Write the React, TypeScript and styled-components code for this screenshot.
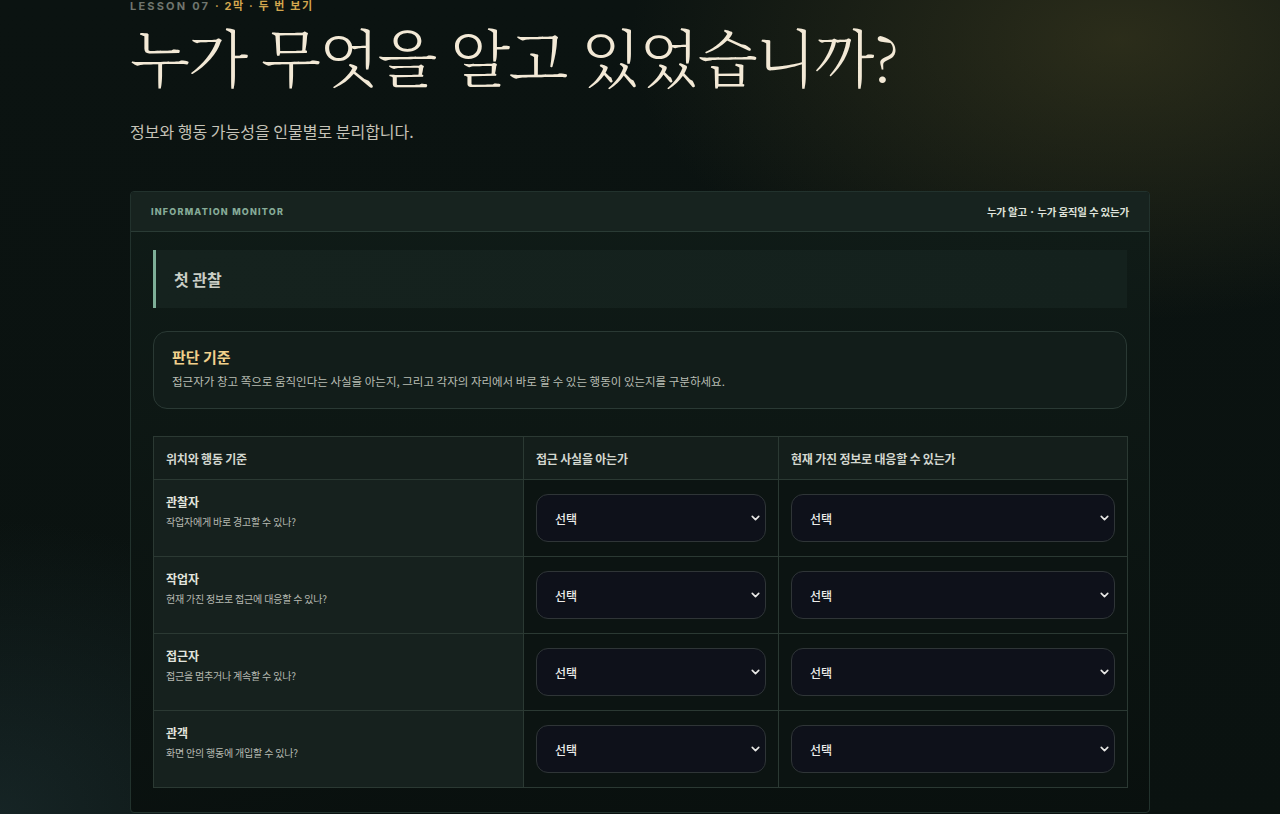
import React from 'react';
import styled, { createGlobalStyle } from 'styled-components';
import { ChevronDown } from 'lucide-react';

const GlobalStyle = createGlobalStyle`
	html, body {
		margin: 0;
		padding: 0;
		background: #0a1210;
	}
	body {
		font-family: 'Inter', 'Noto Sans CJK KR', sans-serif;
		color: #e4e4dc;
		-webkit-font-smoothing: antialiased;
	}
`;

const Page = styled.div`
	min-height: 814px;
	background:
		radial-gradient(ellipse 700px 400px at 1120px 40px, rgba(70, 66, 34, 0.55), transparent 70%),
		radial-gradient(ellipse 520px 420px at 0px 814px, rgba(36, 58, 62, 0.45), transparent 70%),
		linear-gradient(180deg, #0b1311 0%, #0a1210 100%);
	padding: 0 130px 40px;
	box-sizing: border-box;
`;

const Kicker = styled.div`
	font-family: 'Inter', 'Noto Sans CJK KR', sans-serif;
	font-size: 11px;
	font-weight: 700;
	letter-spacing: 2.2px;
	line-height: 12px;
	color: #70756e;
	span {
		color: #d2a64e;
		letter-spacing: 1.6px;
	}
`;

const Title = styled.h1`
	margin: 6px 0 0;
	font-family: 'Noto Serif CJK KR', 'Noto Sans CJK KR', serif;
	font-weight: 300;
	font-size: 62px;
	line-height: 76px;
	letter-spacing: -1.6px;
	color: #f3e9d6;
`;

const Subtitle = styled.p`
	margin: 26px 0 0;
	font-family: 'Noto Sans CJK KR', sans-serif;
	font-size: 16px;
	color: #c6c3b8;
	line-height: 22px;
`;

const Panel = styled.section`
	margin-top: 49px;
	border: 1px solid #22322d;
	border-radius: 4px;
	background: linear-gradient(180deg, rgba(16, 28, 24, 0.92), rgba(9, 16, 14, 0.92));
	overflow: hidden;
`;

const PanelHeader = styled.header`
	height: 39px;
	display: flex;
	align-items: center;
	justify-content: space-between;
	padding: 0 20px;
	background: #17231f;
	border-bottom: 1px solid #2a3b35;
`;

const MonitorLabel = styled.div`
	font-family: 'Inter', sans-serif;
	font-size: 9px;
	font-weight: 800;
	letter-spacing: 1.2px;
	color: #86ab98;
`;

const MonitorNote = styled.div`
	font-family: 'Noto Sans CJK KR', sans-serif;
	font-size: 10.5px;
	font-weight: 700;
	letter-spacing: -0.2px;
	color: #dfe2da;
`;

const PanelBody = styled.div`
	padding: 18px 22px 24px;
`;

const Section = styled.div`
	height: 58px;
	display: flex;
	align-items: center;
	padding-left: 18px;
	border-left: 3px solid #7eaf98;
	background: linear-gradient(90deg, #15221e, #14211d);
	font-family: 'Noto Sans CJK KR', sans-serif;
	font-size: 16px;
	font-weight: 700;
	color: #c9cdc5;
`;

const Criteria = styled.div`
	margin-top: 23px;
	padding: 14px 18px 0;
	height: 78px;
	box-sizing: border-box;
	border: 1px solid #2a3934;
	border-radius: 14px;
	background: #121d1a;
`;

const CriteriaTitle = styled.div`
	font-family: 'Noto Sans CJK KR', sans-serif;
	font-size: 15px;
	font-weight: 700;
	color: #f1d08c;
	line-height: 22px;
`;

const CriteriaText = styled.div`
	margin-top: 5px;
	font-family: 'Noto Sans CJK KR', sans-serif;
	font-size: 11.5px;
	color: #b9bdb4;
	line-height: 16px;
`;

const Table = styled.table`
	margin-top: 27px;
	width: 100%;
	border-collapse: collapse;
	table-layout: fixed;
	font-family: 'Noto Sans CJK KR', sans-serif;
`;

const Col = styled.col<{ $w: number }>`
	width: ${(p) => p.$w}px;
`;

const Th = styled.th`
	height: 42px;
	padding: 0 12px;
	text-align: left;
	font-size: 12px;
	font-weight: 700;
	letter-spacing: -0.2px;
	color: #d3d7cf;
	background: #141e1b;
	border: 1px solid #2b3933;
`;

const Td = styled.td<{ $label?: boolean }>`
	height: 76px;
	padding: 0 12px 0 12px;
	border: 1px solid #2b3933;
	background: ${(p) => (p.$label ? '#16211e' : '#0c1412')};
	vertical-align: middle;
`;

const RoleName = styled.div`
	font-size: 12px;
	font-weight: 700;
	color: #e2e5de;
	line-height: 16px;
	margin-top: -13px;
`;

const RoleQuestion = styled.div`
	margin-top: 5px;
	font-size: 10px;
	letter-spacing: -0.2px;
	color: #b6bab2;
	line-height: 14px;
`;

const SelectWrap = styled.div`
	position: relative;
	svg {
		position: absolute;
		right: 4px;
		top: 50%;
		transform: translateY(-50%);
		color: #e8e8e6;
		pointer-events: none;
	}
`;

const Select = styled.select`
	appearance: none;
	width: 100%;
	height: 48px;
	padding: 0 18px;
	border-radius: 12px;
	border: 1px solid #2f3537;
	background: #0e111a;
	color: #ececea;
	font-family: 'Noto Sans CJK KR', sans-serif;
	font-size: 12px;
	font-weight: 500;
	outline: none;
`;

const rows = [
	{ name: '관찰자', q: '작업자에게 바로 경고할 수 있나?' },
	{ name: '작업자', q: '현재 가진 정보로 접근에 대응할 수 있나?' },
	{ name: '접근자', q: '접근을 멈추거나 계속할 수 있나?' },
	{ name: '관객', q: '화면 안의 행동에 개입할 수 있나?' },
];

const Choice = () => (
	<SelectWrap>
		<Select defaultValue=''>
			<option value=''>선택</option>
			<option value='yes'>예</option>
			<option value='no'>아니오</option>
		</Select>
		<ChevronDown size={13} strokeWidth={3} />
	</SelectWrap>
);

export default function App() {
	return (
		<>
			<GlobalStyle />
			<Page>
				<Kicker>
					LESSON 07 <span>· 2막 · 두 번 보기</span>
				</Kicker>
				<Title>누가 무엇을 알고 있었습니까?</Title>
				<Subtitle>정보와 행동 가능성을 인물별로 분리합니다.</Subtitle>
				<Panel>
					<PanelHeader>
						<MonitorLabel>INFORMATION MONITOR</MonitorLabel>
						<MonitorNote>누가 알고 · 누가 움직일 수 있는가</MonitorNote>
					</PanelHeader>
					<PanelBody>
						<Section>첫 관찰</Section>
						<Criteria>
							<CriteriaTitle>판단 기준</CriteriaTitle>
							<CriteriaText>
								접근자가 창고 쪽으로 움직인다는 사실을 아는지, 그리고 각자의 자리에서 바로 할 수 있는 행동이 있는지를 구분하세요.
							</CriteriaText>
						</Criteria>
						<Table>
							<colgroup>
								<Col $w={370} />
								<Col $w={255} />
								<Col $w={349} />
							</colgroup>
							<thead>
								<tr>
									<Th>위치와 행동 기준</Th>
									<Th>접근 사실을 아는가</Th>
									<Th>현재 가진 정보로 대응할 수 있는가</Th>
								</tr>
							</thead>
							<tbody>
								{rows.map((r) => (
									<tr key={r.name}>
										<Td $label>
											<RoleName>{r.name}</RoleName>
											<RoleQuestion>{r.q}</RoleQuestion>
										</Td>
										<Td>
											<Choice />
										</Td>
										<Td>
											<Choice />
										</Td>
									</tr>
								))}
							</tbody>
						</Table>
					</PanelBody>
				</Panel>
			</Page>
		</>
	);
}
